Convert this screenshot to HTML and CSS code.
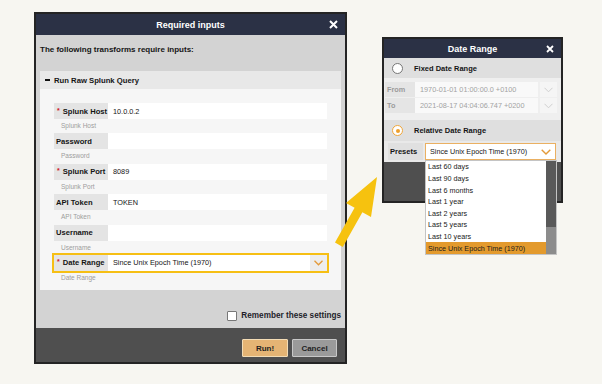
FILE: index.html
```html
<!DOCTYPE html>
<html>
<head>
<meta charset="utf-8">
<link rel="stylesheet" href="styles.css">
</head>
<body>
<div class="canvas">
  <div class="win win-left">
    <div class="hdr">
      <span class="title">Required inputs</span>
      <svg class="close" width="9" height="9" viewBox="0 0 9 9"><path d="M1 1L8 8M8 1L1 8" stroke="#fff" stroke-width="2"/></svg>
    </div>
    <div class="body">
      <div class="intro">The following transforms require inputs:</div>
      <div class="sect"><span class="minus"></span>Run Raw Splunk Query</div>
      <div class="panel">
        <div class="field"><div class="lbl"><span class="req">*</span>Splunk Host</div><div class="inp">10.0.0.2</div></div>
        <div class="hint">Splunk Host</div>
        <div class="field"><div class="lbl">Password</div><div class="inp"></div></div>
        <div class="hint">Password</div>
        <div class="field"><div class="lbl"><span class="req">*</span>Splunk Port</div><div class="inp">8089</div></div>
        <div class="hint">Splunk Port</div>
        <div class="field"><div class="lbl">API Token</div><div class="inp">TOKEN</div></div>
        <div class="hint">API Token</div>
        <div class="field"><div class="lbl">Username</div><div class="inp"></div></div>
        <div class="hint">Username</div>
        <div class="field hl"><div class="lbl"><span class="req">*</span>Date Range</div><div class="inp sel"><span class="val">Since Unix Epoch Time (1970)</span><span class="chev"><svg width="9" height="6" viewBox="0 0 9 6"><path d="M0.5 0.8L4.5 4.8L8.5 0.8" fill="none" stroke="#e39a3a" stroke-width="1.3"/></svg></span></div></div>
        <div class="hint">Date Range</div>
      </div>
      <div class="remember"><span class="cb"></span>Remember these settings</div>
    </div>
    <div class="foot">
      <button class="btn run">Run!</button>
      <button class="btn cancel">Cancel</button>
    </div>
  </div>

  <div class="win win-right">
    <div class="hdr hdr-r">
      <span class="title">Date Range</span>
      <svg class="close close-r" width="8" height="8" viewBox="0 0 8 8"><path d="M1 1L7 7M7 1L1 7" stroke="#fff" stroke-width="1.8"/></svg>
    </div>
    <div class="rbody">
      <div class="radrow"><span class="radio"></span>Fixed Date Range</div>
      <div class="dates">
        <div class="drow"><div class="dl">From</div><div class="di">1970-01-01 01:00:00.0 +0100</div><div class="da"><svg width="9" height="6" viewBox="0 0 9 6"><path d="M0.5 0.8L4.5 4.8L8.5 0.8" fill="none" stroke="#cfcfcf" stroke-width="1"/></svg></div></div>
        <div class="drow"><div class="dl">To</div><div class="di">2021-08-17 04:04:06.747 +0200</div><div class="da"><svg width="9" height="6" viewBox="0 0 9 6"><path d="M0.5 0.8L4.5 4.8L8.5 0.8" fill="none" stroke="#cfcfcf" stroke-width="1"/></svg></div></div>
      </div>
      <div class="radrow rel"><span class="radio on"><span class="dot"></span></span>Relative Date Range</div>
      <div class="presets">
        <div class="pl">Presets</div>
        <div class="ps"><span>Since Unix Epoch Time (1970)</span><svg width="10" height="6" viewBox="0 0 10 6"><path d="M0.7 0.7L5 5L9.3 0.7" fill="none" stroke="#e39a3a" stroke-width="1.4"/></svg></div>
      </div>
    </div>
    <div class="foot foot-r"></div>
    <div class="list">
      <div class="items">
        <div class="it">Last 60 days</div>
        <div class="it">Last 90 days</div>
        <div class="it">Last 6 months</div>
        <div class="it">Last 1 year</div>
        <div class="it">Last 2 years</div>
        <div class="it">Last 5 years</div>
        <div class="it">Last 10 years</div>
        <div class="it on">Since Unix Epoch Time (1970)</div>
      </div>
      <div class="sb"><div class="thumb"></div></div>
    </div>
  </div>

  <svg class="arrow" width="602" height="384" viewBox="0 0 602 384"><polygon points="377,177 371,217 362.4,212.2 342.8,247 335,242.6 354.6,207.8 346,203" fill="#f6c20f"/></svg>
</div>
</body>
</html>
```
FILE: styles.css
```css
* { box-sizing: border-box; }
html, body { margin: 0; padding: 0; }
body { background: #f7f6f1; font-family: "Liberation Sans", Arial, sans-serif; color: #151515; }
.canvas { position: relative; width: 602px; height: 384px; overflow: hidden; background: #f7f6f1; }

.win { position: absolute; border: 2px solid #242424; display: flex; flex-direction: column; }
.win-left { left: 34px; top: 12px; width: 313px; height: 352px; }
.win-right { left: 382px; top: 37px; width: 181px; height: 166px; }

.hdr { height: 21px; background: #2b3145; display: flex; align-items: center; justify-content: center; position: relative; flex: none; }
.hdr-r { height: 19px; }
.title { color: #fff; font-weight: bold; font-size: 9px; }
.close { position: absolute; right: 7px; top: 6px; }
.close-r { right: 7px; top: 6px; }

.body { height: 293px; background: #d3d3d3; padding: 0 4px; display: flex; flex-direction: column; flex: none; }
.intro { height: 36px; padding-top: 10px; font-size: 8px; font-weight: bold; line-height: 10px; flex: none; }
.sect { height: 18px; background: #e8e8e8; display: flex; align-items: center; font-size: 7.7px; font-weight: bold; padding-left: 5px; flex: none; }
.minus { width: 5px; height: 1.6px; background: #111; margin-right: 4px; }
.panel { height: 201px; background: #f6f6f6; padding: 14px 14px 0; display: flex; flex-direction: column; flex: none; }
.field { height: 16px; display: flex; flex: none; }
.lbl { width: 54px; background: #e4e4e4; font-size: 7.6px; font-weight: bold; display: flex; align-items: center; padding-left: 2px; }
.req { color: #d0201f; font-size: 7px; margin: 0 3px 0 1px; position: relative; top: -1px; }
.inp { flex: 1; background: #fff; font-size: 7.3px; display: flex; align-items: center; padding-left: 5px; }
.hint { height: 14.4px; font-size: 6.5px; color: #9d9d9d; padding: 3px 0 0 7px; flex: none; }
.hl { outline: 2px solid #f6bf14; }
.sel { padding-right: 0; }
.sel .val { flex: 1; }
.chev { width: 17px; height: 100%; background: #ededed; display: flex; align-items: center; justify-content: center; }

.remember { flex: 1; display: flex; justify-content: flex-end; align-items: flex-start; padding-top: 21px; font-size: 8.2px; font-weight: bold; color: #1e1e2a; line-height: 10px; }
.cb { width: 10px; height: 10px; background: #fff; border: 1px solid #777; border-radius: 1px; margin-right: 4px; }

.foot { height: 34px; background: #4f4f4f; display: flex; justify-content: flex-end; align-items: flex-start; padding: 11px 8px 0 0; gap: 4px; flex: none; }
.btn { height: 18px; font-family: "Liberation Sans", Arial, sans-serif; font-size: 8px; font-weight: bold; color: #222; padding: 0; border-radius: 1px; }
.run { width: 46px; background: #e5b474; border: 1px solid #f3dcb5; }
.cancel { width: 45px; background: #9a9a9a; border: 1px solid #c8c8c8; }

.rbody { height: 104px; background: #e9e9e9; display: flex; flex-direction: column; flex: none; }
.radrow { height: 20px; background: #dfdfdf; display: flex; align-items: center; font-size: 7.5px; font-weight: bold; padding-left: 8px; flex: none; }
.rel { height: 21px; }
.radio { width: 11px; height: 11px; border: 1px solid #777; border-radius: 50%; background: #fff; margin-right: 11px; display: flex; align-items: center; justify-content: center; }
.radio.on { border: 1.5px solid #efa63a; }
.dot { width: 4px; height: 4px; border-radius: 50%; background: #ee9f2c; }
.dates { height: 42px; background: #efefef; padding: 4px 4px 0 1px; display: flex; flex-direction: column; gap: 1px; flex: none; }
.drow { height: 15px; display: flex; }
.dl { width: 30px; background: #e5e5e5; color: #9b9b9b; font-size: 7.3px; font-weight: bold; display: flex; align-items: center; padding-left: 2px; }
.di { width: 123px; background: #f9f9f9; color: #a3a3a3; font-size: 7.3px; display: flex; align-items: center; padding-left: 5px; }
.da { width: 17px; margin-left: 2px; background: #f5f5f5; display: flex; align-items: center; justify-content: center; }
.presets { flex: 1; display: flex; align-items: flex-start; padding: 2px 5px 0 4px; background: #e9e9e9; }
.pl { width: 35px; height: 17px; background: #e0e0e0; font-size: 7.5px; font-weight: bold; display: flex; align-items: center; padding-left: 2px; }
.ps { margin-left: 2px; width: 131px; height: 17px; background: #fff; border: 1px solid #eab062; display: flex; align-items: center; justify-content: space-between; padding: 0 4px 0 4px; font-size: 7.2px; }
.foot-r { height: 39px; padding: 0; }

.list { position: absolute; left: 41px; top: 121px; width: 132px; height: 95px; background: #fff; border: 1px solid #c4c4c4; display: flex; }
.items { flex: 1; display: flex; flex-direction: column; }
.it { height: 11.75px; font-size: 7.2px; display: flex; align-items: center; padding-left: 2px; color: #1a1a1a; }
.it.on { background: #e39a2d; }
.sb { width: 10px; background: #8c8c8c; }
.thumb { height: 66px; background: #595959; }

.arrow { position: absolute; left: 0; top: 0; pointer-events: none; }
```
